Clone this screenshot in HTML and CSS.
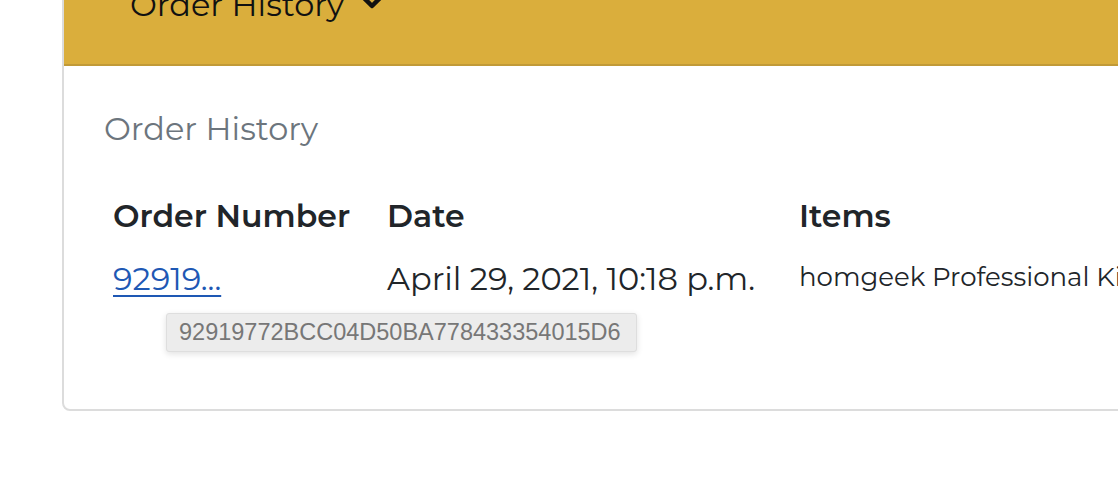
FILE: index.html
```
<!DOCTYPE html>
<html lang="en">
<head>
<meta charset="utf-8">
<title>Order History</title>
<link rel="stylesheet" href="styles.css">
</head>
<body>
<div class="page">
  <div class="card">
    <div class="card-header">
      <span class="header-title">Order History</span>
      <svg class="chevron" width="24" height="18" viewBox="0 0 24 18" aria-hidden="true"><path d="M4 4 L12 12 L20 4" fill="none" stroke="#111" stroke-width="4.5" stroke-linecap="round" stroke-linejoin="round"/></svg>
    </div>
    <div class="card-body">
      <h2 class="subtitle">Order History</h2>
      <table class="orders">
        <thead>
          <tr>
            <th class="col-num">Order Number</th>
            <th class="col-date">Date</th>
            <th class="col-items">Items</th>
          </tr>
        </thead>
        <tbody>
          <tr>
            <td class="cell-num"><a href="#" class="order-link">92919...</a>
              <span class="tooltip">92919772BCC04D50BA778433354015D6</span>
            </td>
            <td class="cell-date">April 29, 2021, 10:18 p.m.</td>
            <td class="cell-items">homgeek Professional Kitchen Knife Set</td>
          </tr>
        </tbody>
      </table>
    </div>
  </div>
</div>
</body>
</html>
```
FILE: styles.css
```
html, body {
  margin: 0;
  padding: 0;
  background: #ffffff;
  overflow: hidden;
}
body {
  font-family: Montserrat, "DejaVu Sans", sans-serif;
  color: #212529;
}
.page {
  padding-left: 62px;
  width: 1300px;
}
.card {
  margin-top: -36px;
  border: 2px solid #dcdcdc;
  border-radius: 8px;
  background: #fff;
  height: 447px;
  box-sizing: border-box;
}
.card-header {
  background: #daae3c;
  border-bottom: 2px solid #c19a37;
  height: 100px;
  box-sizing: border-box;
  padding: 20px 0 0 66px;
  display: flex;
  align-items: flex-start;
  gap: 16px;
  border-radius: 6px 6px 0 0;
}
.header-title {
  font-size: 32px;
  line-height: 38px;
  color: #111;
}
.chevron {
  margin-top: 8px;
}
.card-body {
  padding: 41px 0 0 40px;
}
.subtitle {
  margin: 0;
  font-weight: 400;
  font-size: 32px;
  line-height: 44px;
  color: #6c757d;
}
.orders {
  border-collapse: collapse;
  margin-top: 43px;
  table-layout: fixed;
  width: 1100px;
}
.orders th {
  text-align: left;
  font-weight: 600;
  font-size: 31.5px;
  line-height: 44px;
  padding: 0 0 0 9px;
}
.col-num { width: 265px; }
.col-date { width: 403px; }
.orders td {
  padding: 19px 0 0 9px;
  vertical-align: top;
  white-space: nowrap;
  line-height: 44px;
}
.cell-num {
  position: relative;
}
.order-link {
  color: #1e58b4;
  font-size: 32px;
  text-decoration: underline;
  text-underline-offset: 5px;
  text-decoration-thickness: 2px;
}
.cell-date {
  font-size: 32px;
}
.orders td.cell-items {
  font-size: 26px;
  padding-top: 17px;
}
.tooltip {
  position: absolute;
  left: 62px;
  top: 75px;
  width: 471px;
  height: 39px;
  box-sizing: border-box;
  background: #ececec;
  border: 1px solid #dedede;
  border-radius: 3px;
  box-shadow: 0 2px 6px rgba(0,0,0,0.12);
  font-family: "Liberation Sans", Arial, sans-serif;
  font-size: 23.5px;
  line-height: 37px;
  color: #777;
  padding-left: 12px;
}
```
